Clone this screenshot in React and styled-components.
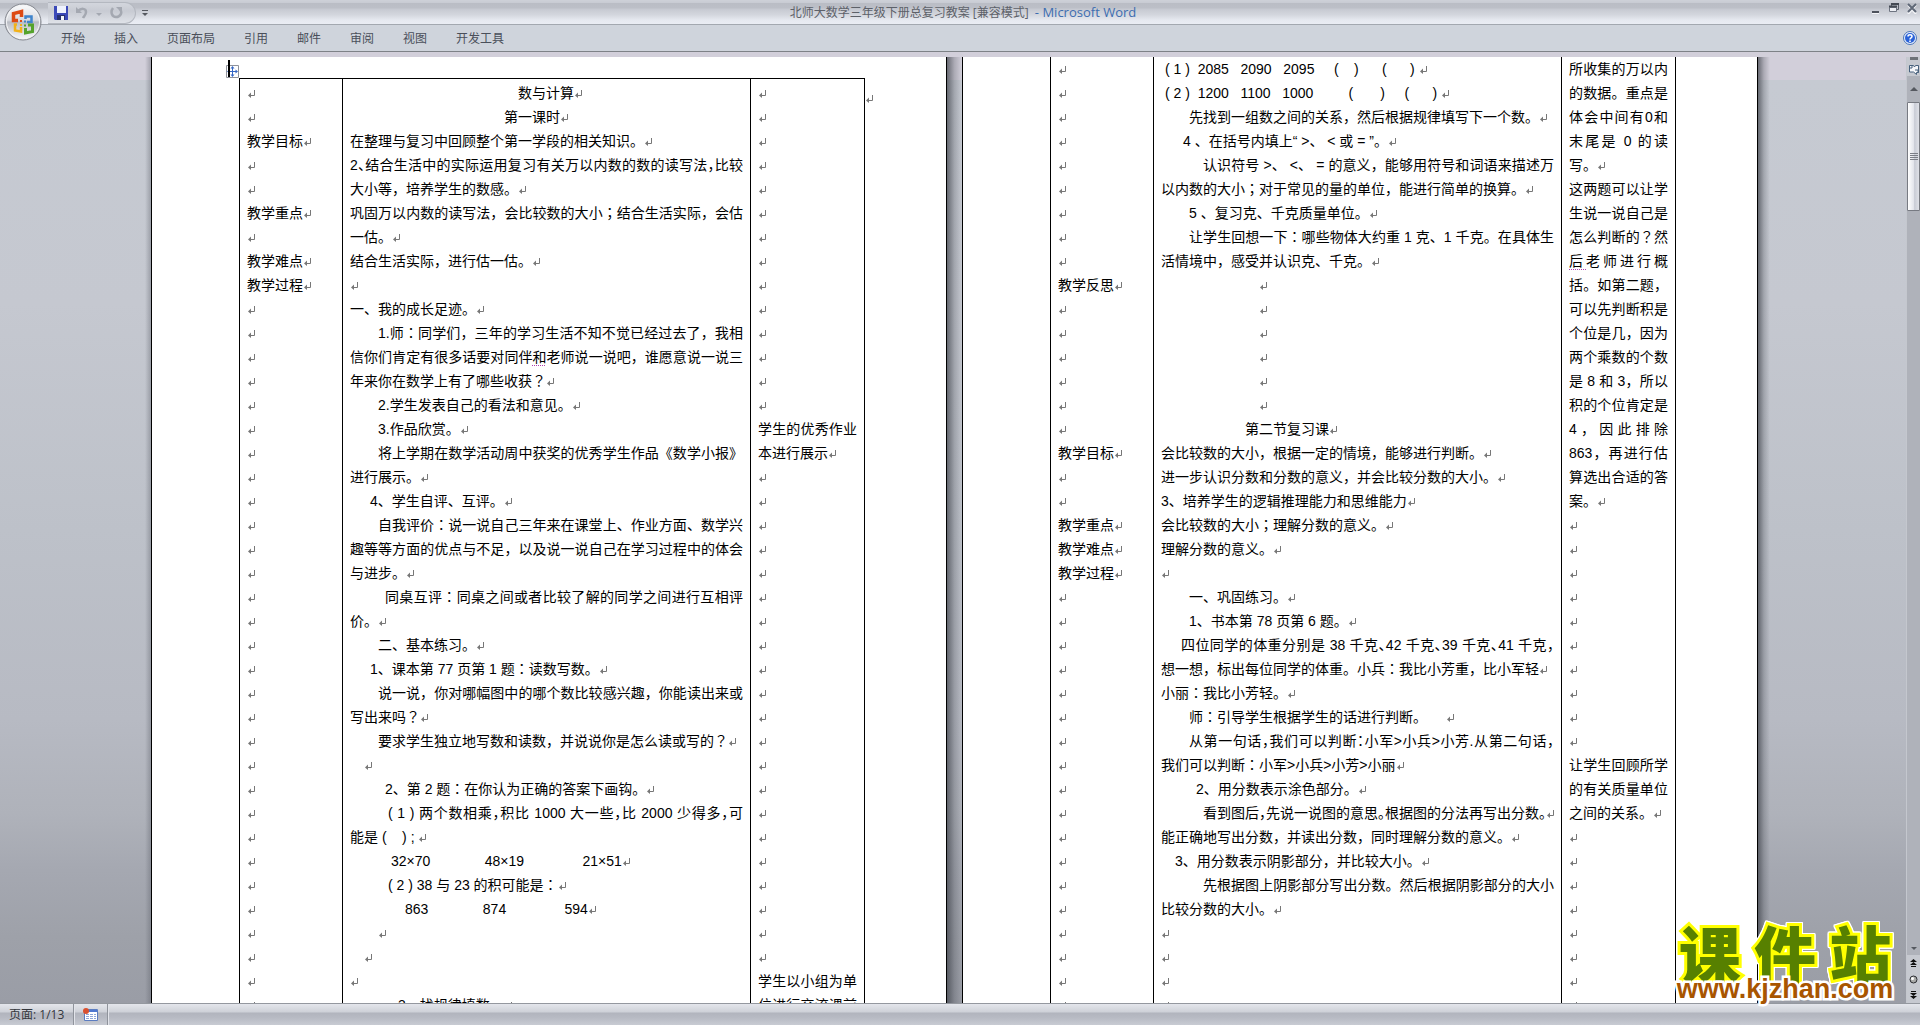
import React from "react";
import styled, { createGlobalStyle } from "styled-components";

const GlobalStyle = createGlobalStyle`
  * {
    box-sizing: border-box;
  }
  body {
    margin: 0;
    overflow: hidden;
    font-family: "Liberation Sans", "Noto Sans CJK SC", sans-serif;
  }
`;

const Window = styled.div`
  position: relative;
  display: flex;
  flex-direction: column;
  height: 100vh;
  background-color: #cfd4dc;
`;

const TitleBar = styled.header`
  display: grid;
  grid-template-columns: 1fr auto 1fr;
  align-items: center;
  height: 25px;
  flex-shrink: 0;
  padding: 0 2px 0 8px;
  border-bottom: 1px solid #a3a8b0;
  background: linear-gradient(
    #ced1d8 0,
    #c8cbd3 3px,
    #babdc5 3px,
    #bcbfc7 8px,
    #c6c9d1 9px,
    #d4d7de 15px,
    #e6e9f0 20px,
    #eaedf4 24px
  );
`;

const QuickAccess = styled.div`
  display: flex;
  align-items: center;
  gap: 5px;
  padding-left: 40px;
`;

const Pill = styled.div`
  display: flex;
  align-items: center;
  gap: 7px;
  width: 88px;
  height: 22px;
  padding-left: 6px;
  border-radius: 0 11px 11px 0;
  border: 1px solid #b4b8c0;
  border-left: none;
  background: linear-gradient(#d3d6dd, #c8cbd3 40%, #dfe2e8);
`;

const IconButton = styled.button`
  display: flex;
  align-items: center;
  justify-content: center;
  padding: 0;
  border: none;
  background: none;
  cursor: pointer;
`;

const OfficeButton = styled(IconButton)`
  position: absolute;
  left: 4px;
  top: 3px;
  z-index: 2;
`;

const Title = styled.h1`
  margin: 0;
  font-family: "Open Sans", "Noto Sans CJK SC", sans-serif;
  font-size: 12px;
  font-weight: 400;
  line-height: 24px;
  color: #5d6169;
`;

const AppName = styled.span`
  padding-left: 3px;
  font-size: 13px;
  color: #3c6db0;
`;

const WindowButtons = styled.div`
  display: flex;
  justify-content: flex-end;
  align-items: center;
  gap: 6px;
  height: 16px;
  align-self: start;
`;

const Tabs = styled.nav`
  display: flex;
  align-items: center;
  gap: 29px;
  height: 27px;
  flex-shrink: 0;
  padding: 0 3px 0 61px;
  background-color: #cfd4dc;
  border-bottom: 1px solid #7e8287;
`;

const Tab = styled.button`
  padding: 0;
  border: none;
  background: none;
  font-family: "Noto Sans CJK SC", sans-serif;
  font-size: 12px;
  line-height: 24px;
  color: #4a4f5a;
  cursor: pointer;
`;

const Help = styled(IconButton)`
  margin-left: auto;
`;

const Workspace = styled.div`
  display: flex;
  flex: 1;
  min-height: 0;
  border-top: 5px solid #d2cfda;
`;

const Desk = styled.main`
  display: flex;
  flex: 1;
  justify-content: center;
  min-width: 0;
  padding-left: 9px;
  overflow: hidden;
  background: linear-gradient(
    #d2cfda 23px,
    #c6cad2 23px,
    #c5c8d0 26%,
    #bdc1c9 50%,
    #b7bac3 70%,
    #afb2ba 80%,
    #a5a8b1 86%,
    #9ea1a9 93%,
    #9a9da6 100%
  );
`;

const Gutter = styled.div`
  flex-shrink: 0;
  width: ${(props) => props.$width}px;
  background: ${(props) =>
    props.$before
      ? "linear-gradient(to right, transparent, rgba(90, 94, 104, 0.4))"
      : "linear-gradient(to right, rgba(60, 64, 72, 0.7), rgba(60, 64, 72, 0.25) 50%, transparent)"};
`;

const Sheet = styled.article`
  position: relative;
  flex-shrink: 0;
  width: 796px;
  padding: ${(props) => (props.$first ? "21px" : "0")} 82px 0 87px;
  overflow: hidden;
  background-color: #fff;
  border: 1px solid #000;
  border-width: 0 1px;
`;

const DocTable = styled.table`
  width: 625px;
  table-layout: fixed;
  border-collapse: collapse;
  border: 1px solid #000;
  border-top-width: ${(props) => (props.$continued ? "0" : "1px")};
`;

const Cell = styled.td`
  width: ${(props) => props.$width || "auto"};
  padding: ${(props) => (props.$continued ? "0" : "2px")} 7px 0;
  vertical-align: top;
  border-left: 1px solid #000;
`;

const Line = styled.div`
  height: 24px;
  padding-left: ${(props) => props.$indent}px;
  font-size: 14px;
  line-height: 24px;
  color: #000;
  white-space: ${(props) => (props.$full ? "nowrap" : "pre")};
  text-align-last: ${(props) => (props.$full ? "justify" : "left")};
  font-feature-settings: ${(props) => (props.$tight ? '"halt"' : "normal")};
`;

const Punct = styled.span`
  font-family: "Noto Sans CJK JP", sans-serif;
  line-height: 1px;
`;

const Grammar = styled.span`
  text-decoration: underline dotted #b040b0 1px;
  text-underline-offset: 3px;
`;

const Anchor = styled.div`
  position: absolute;
  left: 74px;
  top: 3px;
`;

const RowEnd = styled.div`
  position: absolute;
  left: 713px;
  top: 29px;
  line-height: 24px;
`;

const ScrollBar = styled.div`
  display: flex;
  flex-direction: column;
  align-items: center;
  width: 14px;
  flex-shrink: 0;
  border-left: 1px solid #c4c7ce;
  background-color: #afb2ba;
`;

const ScrollTop = styled.div`
  display: flex;
  flex-direction: column;
  align-items: center;
  gap: 4px;
  width: 100%;
  height: 19px;
  background-color: #c6c9d0;
`;

const Splitter = styled.div`
  width: 8px;
  height: 3px;
  flex-shrink: 0;
  background-color: #6e7178;
`;

const ScrollTrack = styled.div`
  flex: 1;
  width: 100%;
`;

const Thumb = styled.div`
  display: flex;
  flex-direction: column;
  align-items: center;
  justify-content: center;
  gap: 1px;
  height: 109px;
  border: 1px solid #777a82;
  border-radius: 1px;
  background: linear-gradient(to right, #fff, #e3e5ec 50%, #c9ccd6 60%, #dfe1e8);
`;

const Grip = styled.div`
  width: 8px;
  height: 1px;
  background-color: #7b7e87;
`;

const ScrollStep = styled(IconButton)`
  width: 13px;
  height: ${(props) => props.$height}px;
`;

const BrowseButtons = styled.div`
  width: 100%;
  background-color: #c6c9d0;
`;

const StatusBar = styled.footer`
  display: flex;
  height: 22px;
  flex-shrink: 0;
  border-top: 1px solid #94989f;
  background: linear-gradient(#e4e6ec, #ced1d8 8px, #b1b4bd 9px, #b8bbc4 14px, #c8cbd3 21px);
`;

const StatusItem = styled.div`
  display: flex;
  align-items: center;
  padding: 0 9px;
  border-right: 1px solid #8f939b;
  box-shadow: 1px 0 0 #e2e4ea;
  font-family: "Open Sans", "Noto Sans CJK SC", sans-serif;
  font-size: 12px;
  line-height: 20px;
  color: #33363c;
`;

const Watermark = styled.a`
  position: absolute;
  right: 22px;
  bottom: 24px;
  width: 226px;
  text-decoration: none;
`;

const Brand = styled.div`
  display: flex;
  justify-content: space-around;
  font-family: "Noto Sans CJK SC", sans-serif;
  font-size: 62px;
  font-weight: 900;
  line-height: 50px;
  color: #578000;
  -webkit-text-stroke: 6px #ff0;
  paint-order: stroke fill;
  filter: drop-shadow(1px 0 0 #fff) drop-shadow(-1px 0 0 #fff) drop-shadow(0 1px 0 #fff)
    drop-shadow(0 -1px 0 #fff);
`;

const Domain = styled.div`
  position: relative;
  text-align: center;
  font-size: 27px;
  font-weight: 700;
  line-height: 24px;
  color: #a85500;
  -webkit-text-stroke: 5px #fff;
  paint-order: stroke fill;
`;

const Mark = () => (
  <svg width="8" height="8" viewBox="0 0 8 8">
    <path d="M7.5 0V5.5H2" fill="none" stroke="#777" />
    <path d="M4 2.5V8L1 5.5z" fill="#777" />
  </svg>
);

const Caret = ({ bar, up, color = "#55585f" }) => (
  <svg width="8" height="8" viewBox="0 0 8 8">
    {bar && <path d="M1 1.5h6" stroke={color} />}
    <path d={up ? "M0 6L4 2l4 4z" : "M1 4h6L4 7z"} fill={color} />
  </svg>
);

const OfficeLogo = () => (
  <svg width="38" height="38" viewBox="0 0 38 38">
    <defs>
      <linearGradient id="orb" x1="0" y1="0" x2="0" y2="1">
        <stop offset="0" stopColor="#fdfdfe" />
        <stop offset="0.45" stopColor="#d9dbe0" />
        <stop offset="0.5" stopColor="#b9bcc4" />
        <stop offset="1" stopColor="#fbfbfc" />
      </linearGradient>
    </defs>
    <circle cx="19" cy="19" r="18" fill="url(#orb)" stroke="#83868e" />
    <circle cx="19" cy="19" r="16.5" fill="none" stroke="#f3f4f6" />
    <g fill="none">
      <path d="M14 17.500H9.500V10.500L17.500 8.500V14" stroke="#dd4a14" strokeWidth="3.500" />
      <path d="M21.500 16V13.500H27.500V19H23" stroke="#3f84cc" strokeWidth="2.500" />
      <path d="M13 21.500H11V27.500L17 28.500V24" stroke="#f2b21b" strokeWidth="2.500" />
      <path d="M24 22H28.500V28.500L21.500 30V25" stroke="#55a32c" strokeWidth="3" />
    </g>
    <path d="M16 17h2v2h-2z" fill="#dd4a14" />
    <path d="M20 17.500h2v2h-2z" fill="#3f84cc" />
    <path d="M16 21h2v2h-2z" fill="#f2b21b" />
    <path d="M20 21.500h2v2h-2z" fill="#55a32c" />
  </svg>
);

const SaveIcon = () => (
  <svg width="14" height="14" viewBox="0 0 14 14">
    <path d="M0 0h14v14H1L0 13z" fill="#3b49b8" />
    <path d="M3 0h9v7H3z" fill="#eef2fd" />
    <path d="M3 9h8v5H3z" fill="#25306f" />
    <path d="M7 10h3v4H7z" fill="#f4f6fb" />
  </svg>
);

const UndoIcon = () => (
  <svg width="13" height="13" viewBox="0 0 13 13">
    <path d="M3 5C6 2 11 2 11 6c0 3-2 4-3 6" fill="none" stroke="#a4a8b1" strokeWidth="2.500" />
    <path d="M1 1v6h6z" fill="#a4a8b1" />
  </svg>
);

const RedoIcon = () => (
  <svg width="13" height="13" viewBox="0 0 13 13">
    <path d="M3 2C0 6 2 11 6 11s7-4 4-8" fill="none" stroke="#a4a8b1" strokeWidth="2.500" />
    <path d="M6 1h6v6z" fill="#a4a8b1" />
  </svg>
);

const MinimizeIcon = () => (
  <svg width="12" height="12" viewBox="0 0 12 12">
    <path d="M2 9h7v2H2z" fill="#4d525c" />
    <path d="M2 11h7v1H2z" fill="#f4f5f8" />
  </svg>
);

const RestoreIcon = () => (
  <svg width="12" height="12" viewBox="0 0 12 12">
    <path d="M3.500 5V2.500h7v5H9" fill="none" stroke="#5a5f6a" />
    <path d="M1.500 5.500h7v4h-7z" fill="#eceef3" stroke="#6e7481" />
    <path d="M1 4.500h8M3 2h8" stroke="#454a54" strokeWidth="2" />
  </svg>
);

const CloseIcon = () => (
  <svg width="12" height="12" viewBox="0 0 12 12">
    <path d="M2 3l8 9M10 3l-8 9" stroke="#f4f5f8" strokeWidth="2" />
    <path d="M2 2l8 8M10 2l-8 8" stroke="#5f6877" strokeWidth="2" />
  </svg>
);

const HelpIcon = () => (
  <svg width="14" height="14" viewBox="0 0 14 14">
    <circle cx="7" cy="7" r="6.500" fill="#e9f0fb" stroke="#4b74b8" />
    <circle cx="7" cy="7" r="5" fill="#2a62d8" />
    <path d="M5 5.500C5 3.300 9 3.300 9 5.500 9 7 7 6.800 7 8.500" fill="none" stroke="#fff" strokeWidth="1.500" />
    <path d="M6.200 9.500h1.600V11H6.200z" fill="#fff" />
  </svg>
);

const ReadingIcon = () => (
  <svg width="12" height="11" viewBox="0 0 12 11">
    <path d="M1.500 1.500h4l1 1.500 1-1.500h3v7h-2v2l-3-2.500h-4z" fill="#f6f7fa" stroke="#47607c" />
    <path d="M4 1v3M1 4h3M7 6h3v3" fill="none" stroke="#47607c" />
  </svg>
);

const BrowseIcon = ({ down }) => (
  <svg width="7" height="8" viewBox="0 0 7 8" transform={down ? "rotate(180)" : undefined}>
    <path d="M3.500 0L7 3H0zM3.500 3L7 6H0zM1 7h5v1H1z" fill="#111" />
  </svg>
);

const BallIcon = () => (
  <svg width="9" height="9" viewBox="0 0 9 9">
    <circle cx="4.500" cy="4.500" r="3.500" fill="#a9aaa9" stroke="#2c2e33" />
    <circle cx="3.500" cy="3.500" r="1.500" fill="#fff" />
  </svg>
);

const MacroIcon = () => (
  <svg width="15" height="14" viewBox="0 0 15 14">
    <path d="M1.500 1.500h13v11h-13z" fill="#fff" stroke="#5b7cc0" />
    <path d="M2 2h12v2H2z" fill="#4f78d0" />
    <path d="M3 6.500h10M3 8.500h10M3 10.500h10" stroke="#8ea6d8" strokeDasharray="3 1" />
    <circle cx="3" cy="3" r="3" fill="#d9502e" />
  </svg>
);

const MoveHandle = () => (
  <svg width="13" height="18" viewBox="0 0 13 18">
    <path d="M0.500 5.500h12v12H.5z" fill="#fff" stroke="#8f929b" />
    <path d="M6.500 8v7M3 11.500h7" stroke="#3566c4" />
    <path d="M6.500 6L8.500 8.500h-4zM6.500 17l2-2.500h-4zM1 11.500l2.500-2v4zM12 11.500l-2.500-2v4z" fill="#3566c4" />
    <path d="M2 0h2v17H2z" fill="#000" />
  </svg>
);

// a line that ends its paragraph, and a line that wraps to the next one
const end = (text = "", indent = 0, opts = {}) => ({ text, indent, mark: true, ...opts });
const wrap = (text, indent = 0, opts = {}) => ({ text, indent, full: true, ...opts });
const blank = (count, indent = 0) => Array.from({ length: count }, () => end("", indent));

const pageOne = [
  [
    ...blank(2),
    end("教学目标"),
    ...blank(2),
    end("教学重点"),
    ...blank(1),
    end("教学难点"),
    end("教学过程"),
    ...blank(30)
  ],
  [
    end("数与计算", 168),
    end("第一课时", 154),
    end("在整理与复习中回顾整个第一学段的相关知识。"),
    wrap("2、结合生活中的实际运用复习有关万以内数的数的读写法，比较", 0, { tight: true }),
    end("大小等，培养学生的数感。"),
    wrap("巩固万以内数的读写法，会比较数的大小；结合生活实际，会估"),
    end("一估。"),
    end("结合生活实际，进行估一估。"),
    end(),
    end("一、我的成长足迹。"),
    wrap("1.师：同学们，三年的学习生活不知不觉已经过去了，我相", 28),
    wrap(
      <>
        信你们肯定有很多话要对同伴<Grammar>和</Grammar>老师说一说吧，谁愿意说一说三
      </>
    ),
    end("年来你在数学上有了哪些收获？"),
    end("2.学生发表自己的看法和意见。", 28),
    end("3.作品欣赏。", 28),
    wrap("将上学期在数学活动周中获奖的优秀学生作品《数学小报》", 28),
    end("进行展示。"),
    end("4、学生自评、互评。", 20),
    wrap("自我评价：说一说自己三年来在课堂上、作业方面、数学兴", 28),
    wrap("趣等等方面的优点与不足，以及说一说自己在学习过程中的体会"),
    end("与进步。"),
    wrap("同桌互评：同桌之间或者比较了解的同学之间进行互相评", 35),
    end("价。"),
    end("二、基本练习。", 28),
    end("1、课本第 77 页第 1 题：读数写数。", 20),
    wrap("说一说，你对哪幅图中的哪个数比较感兴趣，你能读出来或", 28),
    end("写出来吗？"),
    end("要求学生独立地写数和读数，并说说你是怎么读或写的？", 28),
    end("", 14),
    end("2、第 2 题：在你认为正确的答案下画钩。", 35),
    wrap("( 1 ) 两个数相乘，积比 1000 大一些，比 2000 少得多，可", 38, { tight: true }),
    end("能是 (    ) ; "),
    end("32×70              48×19               21×51", 41),
    end("( 2 ) 38 与 23 的积可能是：", 38),
    end("863              874               594", 55),
    end("", 28),
    end("", 14),
    end(),
    end("3、找规律填数。", 48)
  ],
  [
    ...blank(14),
    wrap("学生的优秀作业"),
    end("本进行展示"),
    ...blank(21),
    wrap("学生以小组为单"),
    wrap("位进行交流课前")
  ]
];

const pageTwo = [
  [
    ...blank(9),
    end("教学反思"),
    ...blank(6),
    end("教学目标"),
    ...blank(2),
    end("教学重点"),
    end("教学难点"),
    end("教学过程"),
    ...blank(18)
  ],
  [
    end("( 1 )  2085   2090   2095     (    )      (      ) ", 4),
    end("( 2 )  1200   1100   1000         (       )     (      ) ", 4),
    end("先找到一组数之间的关系，然后根据规律填写下一个数。", 28),
    end("4 、在括号内填上“ >、 < 或 = ”。", 22),
    wrap("认识符号 >、 <、 = 的意义，能够用符号和词语来描述万", 42),
    end("以内数的大小；对于常见的量的单位，能进行简单的换算。"),
    end("5 、复习克、千克质量单位。", 28),
    wrap("让学生回想一下：哪些物体大约重 1 克、1 千克。在具体生", 28),
    end("活情境中，感受并认识克、千克。"),
    ...blank(6, 98),
    end("第二节复习课", 84),
    end("会比较数的大小，根据一定的情境，能够进行判断。"),
    end("进一步认识分数和分数的意义，并会比较分数的大小。"),
    end("3、培养学生的逻辑推理能力和思维能力"),
    end("会比较数的大小；理解分数的意义。"),
    end("理解分数的意义。"),
    end(),
    end("一、巩固练习。", 28),
    end("1、书本第 78 页第 6 题。", 28),
    wrap("四位同学的体重分别是 38 千克、42 千克、39 千克、41 千克，", 20, { tight: true }),
    end("想一想，标出每位同学的体重。小兵：我比小芳重，比小军轻"),
    end("小丽：我比小芳轻。"),
    end("师：引导学生根据学生的话进行判断。     ", 28),
    wrap("从第一句话，我们可以判断：小军>小兵>小芳.从第二句话，", 28, { tight: true }),
    end("我们可以判断：小军>小兵>小芳>小丽"),
    end("2、用分数表示涂色部分。", 35),
    end("看到图后，先说一说图的意思。根据图的分法再写出分数。", 42, { full: true, tight: true }),
    end("能正确地写出分数，并读出分数，同时理解分数的意义。"),
    end("3、用分数表示阴影部分，并比较大小。", 14),
    wrap("先根据图上阴影部分写出分数。然后根据阴影部分的大小", 42),
    end("比较分数的大小。"),
    ...blank(4)
  ],
  [
    wrap("所收集的万以内"),
    wrap("的数据。重点是"),
    wrap("体会中间有0和"),
    wrap("末尾是 0 的读"),
    end("写。"),
    wrap("这两题可以让学"),
    wrap("生说一说自己是"),
    wrap("怎么判断的？然"),
    wrap(
      <>
        <Grammar>后</Grammar>老师进行概
      </>
    ),
    wrap("括。如第二题，"),
    wrap("可以先判断积是"),
    wrap("个位是几，因为"),
    wrap("两个乘数的个数"),
    wrap("是 8 和 3，所以"),
    wrap("积的个位肯定是"),
    wrap("4，因此排除"),
    wrap("863，再进行估"),
    wrap("算选出合适的答"),
    end("案。"),
    ...blank(10),
    wrap("让学生回顾所学"),
    wrap("的有关质量单位"),
    end("之间的关系。"),
    ...blank(8)
  ]
];

const colWidths = ["103px", "408px", "114px"];
const tabs = ["开始", "插入", "页面布局", "引用", "邮件", "审阅", "视图", "开发工具"];

// colons, semicolons and question marks sit in the middle of their square
const renderText = (text) => {
  if (typeof text !== "string") {
    return text;
  }
  return text
    .split(/([：；？])/)
    .map((part, index) => (index % 2 ? <Punct key={index}>{part}</Punct> : part));
};

const LessonTable = ({ columns, continued }) => (
  <DocTable $continued={continued}>
    <tbody>
      <tr>
        {columns.map((lines, col) => (
          <Cell key={col} $width={colWidths[col]} $continued={continued}>
            {lines.map((line, index) => (
              <Line key={index} $indent={line.indent} $full={line.full} $tight={line.tight}>
                {renderText(line.text)}
                {line.mark && <Mark />}
              </Line>
            ))}
          </Cell>
        ))}
      </tr>
    </tbody>
  </DocTable>
);

const App = () => {
  return (
    <Window>
      <GlobalStyle />
      <OfficeButton aria-label="Office">
        <OfficeLogo />
      </OfficeButton>
      <TitleBar>
        <QuickAccess>
          <Pill>
            <IconButton aria-label="保存">
              <SaveIcon />
            </IconButton>
            <IconButton aria-label="撤消">
              <UndoIcon />
            </IconButton>
            <Caret color="#a4a8b1" />
            <IconButton aria-label="重复">
              <RedoIcon />
            </IconButton>
          </Pill>
          <Caret bar />
        </QuickAccess>
        <Title>
          北师大数学三年级下册总复习教案 [兼容模式] <AppName>- Microsoft Word</AppName>
        </Title>
        <WindowButtons>
          <IconButton aria-label="最小化">
            <MinimizeIcon />
          </IconButton>
          <IconButton aria-label="还原">
            <RestoreIcon />
          </IconButton>
          <IconButton aria-label="关闭">
            <CloseIcon />
          </IconButton>
        </WindowButtons>
      </TitleBar>
      <Tabs>
        {tabs.map((tab) => (
          <Tab key={tab}>{tab}</Tab>
        ))}
        <Help aria-label="帮助">
          <HelpIcon />
        </Help>
      </Tabs>
      <Workspace>
        <Desk>
          <Gutter $width={6} $before />
          <Sheet $first>
            <Anchor>
              <MoveHandle />
            </Anchor>
            <LessonTable columns={pageOne} />
            <RowEnd>
              <Mark />
            </RowEnd>
          </Sheet>
          <Gutter $width={15} />
          <Sheet>
            <LessonTable columns={pageTwo} continued />
          </Sheet>
          <Gutter $width={12} />
        </Desk>
        <ScrollBar>
          <ScrollTop>
            <Splitter />
            <ReadingIcon />
          </ScrollTop>
          <ScrollStep aria-label="向上" $height={26}>
            <Caret up />
          </ScrollStep>
          <ScrollTrack>
            <Thumb>
              <Grip />
              <Grip />
              <Grip />
              <Grip />
            </Thumb>
          </ScrollTrack>
          <ScrollStep aria-label="向下" $height={16}>
            <Caret />
          </ScrollStep>
          <BrowseButtons>
            <ScrollStep aria-label="前一页" $height={16}>
              <BrowseIcon />
            </ScrollStep>
            <ScrollStep aria-label="选择浏览对象" $height={16}>
              <BallIcon />
            </ScrollStep>
            <ScrollStep aria-label="下一页" $height={16}>
              <BrowseIcon down />
            </ScrollStep>
          </BrowseButtons>
        </ScrollBar>
      </Workspace>
      <StatusBar>
        <StatusItem>页面: 1/13</StatusItem>
        <StatusItem>
          <MacroIcon />
        </StatusItem>
      </StatusBar>
      <Watermark href="#kjzhan">
        <Brand>
          <span>课</span>
          <span>件</span>
          <span>站</span>
        </Brand>
        <Domain>www.kjzhan.com</Domain>
      </Watermark>
    </Window>
  );
};

export default App;
